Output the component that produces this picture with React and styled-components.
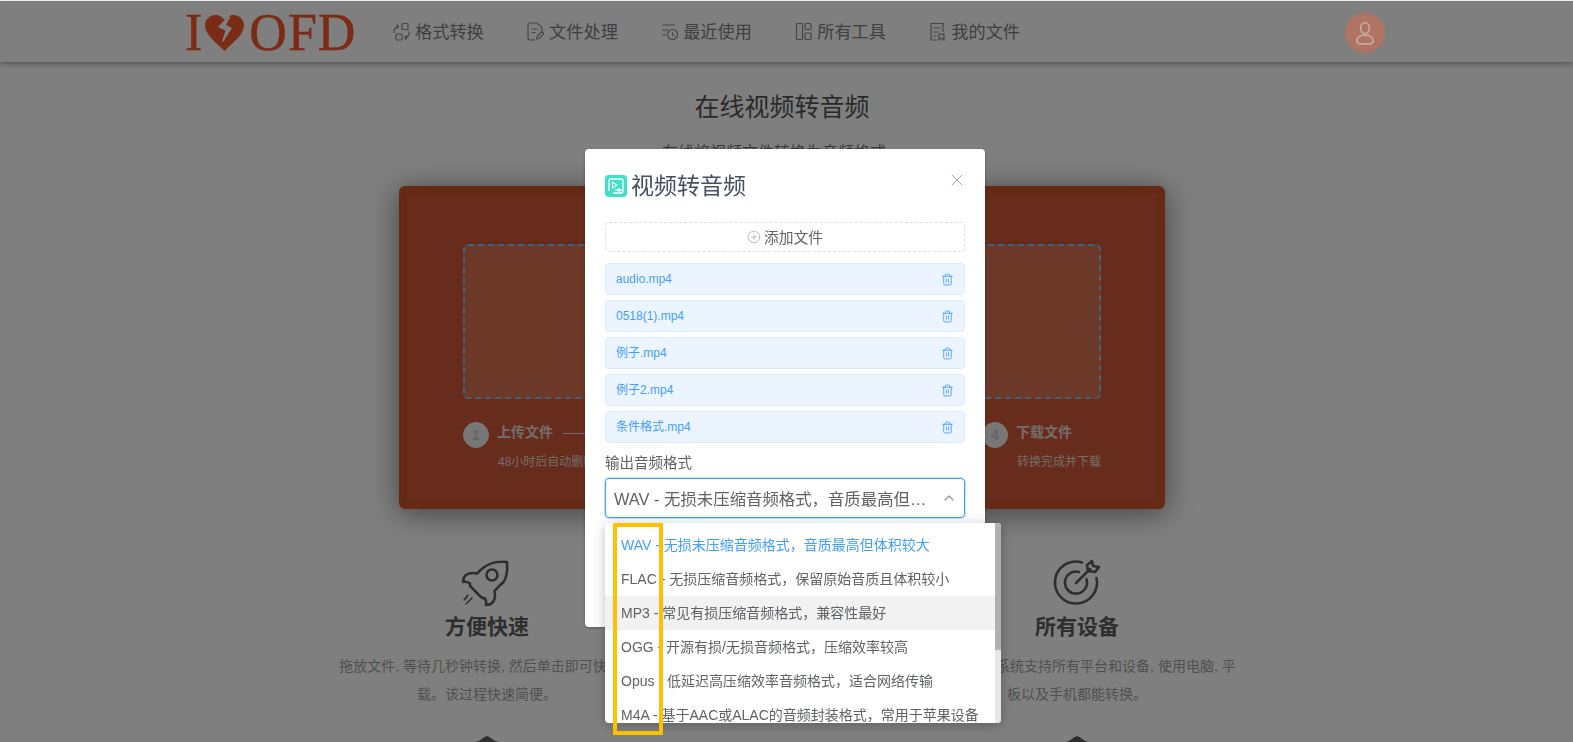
import React from 'react';
import styled, { createGlobalStyle } from 'styled-components';
import { CirclePlus, Trash2, X, ChevronUp, Shield } from 'lucide-react';

const Global = createGlobalStyle`
  html, body { margin: 0; padding: 0; height: 742px; overflow: hidden; background: #fff; }
  * { box-sizing: border-box; }
  body { font-family: "Liberation Sans", "Noto Sans CJK SC", sans-serif; }
`;

const Page = styled.div`
  width: 1573px;
  height: 742px;
  overflow: hidden;
  background: #fff;
  padding-top: 1px;
`;
const Header = styled.header`
  height: 61px;
  display: flex;
  align-items: center;
  padding: 0 188px 0 185px;
  background: #fff;
  box-shadow: 0 2px 6px rgba(0, 0, 0, 0.35);
`;
const Logo = styled.div`
  display: flex;
  align-items: center;
  width: 171px;
  height: 40px;
  margin-top: 2px;
  font-family: "Liberation Serif", serif;
  font-size: 52px;
  line-height: 40px;
  letter-spacing: 1px;
  color: #f85628;
  -webkit-text-stroke: 0.5px #f85628;
`;
const LogoLetter = styled.span`
  width: ${p => p.$w}px;
`;
const Nav = styled.nav`
  display: flex;
  gap: 43.3px;
  margin-left: 37px;
  flex: 1;
`;
const NavItem = styled.a`
  display: flex;
  align-items: center;
  gap: 5px;
  font-size: 17.2px;
  line-height: 24px;
  color: #808080;
  svg { width: 17px; height: 19px; fill: none; stroke: #8c8c8c; stroke-width: 1.2; }
`;
const Avatar = styled.div`
  width: 40px;
  height: 40px;
  border-radius: 50%;
  margin-top: 3px;
  position: relative;
  z-index: 20;
  background: #b07464;
  display: flex;
  align-items: center;
  justify-content: center;
  svg { width: 26px; height: 26px; fill: none; stroke: #c9aaa1; stroke-width: 1.5; }
`;
const Main = styled.main`
  width: 1564px;
  display: flex;
  flex-direction: column;
  align-items: center;
`;
const PageTitle = styled.h1`
  margin: 28px 0 0;
  font-size: 25px;
  line-height: 34px;
  font-weight: 400;
  color: #555;
`;
const Subtitle = styled.p`
  margin: 17px 0 0;
  font-size: 16px;
  line-height: 24px;
  color: #777;
`;
const Panel = styled.section`
  width: 766px;
  height: 323px;
  margin-top: 21px;
  padding: 50px 56px 0;
  border: 8px solid #cc5228;
  border-radius: 6px;
  background: #d05838;
  box-shadow: 0 4px 30px rgba(0, 0, 0, 0.5);
`;
const DropZone = styled.div`
  height: 155px;
  border: 2px dashed #7cc4ff;
  border-radius: 5px;
  background: #d87050;
`;
const Steps = styled.div`
  display: flex;
  margin-top: 23px;
`;
const Step = styled.div`
  display: flex;
  flex: ${p => (p.$last ? '0 0 119px' : '1')};
  gap: 8px;
`;
const StepNumber = styled.div`
  flex: none;
  width: 26px;
  height: 26px;
  border-radius: 50%;
  border: 1px solid #f6f6f6;
  background: #eee;
  color: #c8c8c8;
  font-size: 14px;
  font-weight: 700;
  line-height: 24px;
  text-align: center;
`;
const StepBody = styled.div`
  flex: 1;
  min-width: 0;
`;
const StepHead = styled.div`
  display: flex;
  align-items: center;
  gap: 10px;
  height: 18px;
  font-size: 14px;
  font-weight: 700;
  color: #e6dcd6;
  white-space: nowrap;
`;
const StepLine = styled.span`
  flex: 1;
  height: 1px;
  margin: 5px 10px 0 0;
  background: #e6dcd6;
`;
const StepSub = styled.div`
  margin-top: 13px;
  padding-left: 1px;
  font-size: 12px;
  line-height: 18px;
  color: #e6dcd6;
  white-space: nowrap;
`;
const Features = styled.div`
  display: grid;
  grid-template-columns: 320px 320px;
  column-gap: 270px;
  row-gap: 27px;
  margin-top: 50px;
`;
const Feature = styled.div`
  display: flex;
  flex-direction: column;
  align-items: center;
  text-align: center;
  svg.feature {
    width: 46px;
    height: 46px;
    overflow: visible;
    fill: none;
    stroke: #5c5c5c;
    stroke-width: 2.6;
    stroke-linecap: round;
    stroke-linejoin: round;
  }
`;
const FeatureTitle = styled.h3`
  margin: 5px 0 0;
  font-size: 21px;
  line-height: 34px;
  font-weight: 700;
  color: #5c5c5c;
`;
const FeatureText = styled.p`
  width: ${p => p.$w}px;
  flex: none;
  margin: 8px 0 0;
  font-size: 14px;
  line-height: 28px;
  color: #a0a0a0;
`;
const Overlay = styled.div`
  position: fixed;
  inset: 1px 0 0 0;
  z-index: 10;
  background: rgba(0, 0, 0, 0.5);
  display: flex;
  justify-content: center;
  align-items: flex-start;
  padding: 148px 3px 0 0;
`;
const Modal = styled.div`
  width: 400px;
  height: 478px;
  padding: 26px 20px 0;
  border-radius: 4px;
  background: #fff;
  box-shadow: 0 1px 3px rgba(0, 0, 0, 0.3);
  position: relative;
`;
const ModalHead = styled.div`
  display: flex;
  align-items: center;
  gap: 4px;
  height: 22px;
`;
const ModalTitle = styled.h2`
  margin: 0;
  font-size: 23px;
  line-height: 22px;
  font-weight: 400;
  color: #44505f;
`;
const CloseButton = styled.button`
  position: absolute;
  top: 21px;
  right: 18px;
  width: 20px;
  height: 20px;
  padding: 0;
  border: 0;
  background: none;
  color: #909399;
  display: flex;
  align-items: center;
  justify-content: center;
`;
const AddButton = styled.button`
  width: 100%;
  height: 30px;
  margin-top: 25px;
  display: flex;
  align-items: center;
  justify-content: center;
  gap: 3px;
  padding: 0 0 1px;
  border: 1px dashed #dcdfe6;
  border-radius: 4px;
  background: #fff;
  font-family: inherit;
  font-size: 14.8px;
  color: #606266;
  svg { color: #909399; }
`;
const FileList = styled.ul`
  list-style: none;
  display: flex;
  flex-direction: column;
  gap: 5px;
  margin: 11px 0 0;
  padding: 0;
`;
const FileRow = styled.li`
  height: 32px;
  padding: 0 10px;
  display: flex;
  align-items: center;
  justify-content: space-between;
  border: 1px solid #d9ecff;
  border-radius: 4px;
  background: #ecf5ff;
  color: #409eff;
  font-size: 12px;
  line-height: 16px;
`;
const FileName = styled.span`
  display: block;
  height: 16px;
`;
const FieldLabel = styled.label`
  display: block;
  margin-top: 10px;
  font-size: 14.5px;
  line-height: 20px;
  color: #606266;
`;
const SelectWrap = styled.div`
  position: relative;
  margin-top: 5px;
`;
const SelectBox = styled.div`
  height: 40px;
  padding: 0 7px 0 8px;
  display: flex;
  align-items: center;
  justify-content: space-between;
  border: 1px solid #409eff;
  border-radius: 4px;
  box-shadow: 0 0 0 1px #c6e2ff;
  font-size: 16.4px;
  color: #606266;
`;
const SelectValue = styled.span`
  width: 319px;
  white-space: nowrap;
  overflow: hidden;
  text-overflow: ellipsis;
`;
const Arrow = styled.span`
  display: flex;
  color: #909399;
`;
const Convert = styled.button`
  width: 100%;
  height: 40px;
  margin-top: 24px;
  border: 0;
  border-radius: 4px;
  background: #409eff;
  color: #fff;
  font-family: inherit;
  font-size: 14px;
`;
const Dropdown = styled.div`
  position: absolute;
  top: 45px;
  left: 0;
  width: 396px;
  height: 200px;
  display: flex;
  border-radius: 4px;
  background: #fff;
  box-shadow: 0 2px 12px rgba(0, 0, 0, 0.25);
  overflow: hidden;
`;
const OptionList = styled.ul`
  list-style: none;
  flex: 1;
  margin: 0;
  padding: 5px 0;
  overflow: hidden;
`;
const Option = styled.li`
  height: 34px;
  padding: 0 16px;
  font-size: 14px;
  line-height: 34px;
  white-space: nowrap;
  color: ${p => (p.$selected ? '#409eff' : '#606266')};
  background: ${p => (p.$hover ? '#f2f2f2' : 'transparent')};
`;
const ScrollTrack = styled.div`
  flex: none;
  width: 6px;
  background: #e6e6e6;
`;
const ScrollThumb = styled.div`
  height: 127px;
  background: #b0b0b0;
`;
const Highlight = styled.div`
  position: absolute;
  top: 45px;
  left: 8px;
  width: 50px;
  height: 212px;
  border: 4px solid #ffc000;
  border-radius: 1px;
  pointer-events: none;
`;

const Heart = () => (
  <svg width="39" height="36" viewBox="0 0 39 36" style={{ flex: 'none', marginLeft: 2, marginRight: 5 }}>
    <path fill="#f85628" d="M19.5 36C12 28 0 20 0 10.5 0 4.5 5 0 10.500 0c3.600 0 7 2 9 5 2-3 5.400-5 9-5C34 0 39 4.500 39 10.500 39 20 27 28 19.500 36Z" />
    <path fill="#fff" d="M19.500 5l-6.500 7 7.500 3.500-3.500 11 1 .6 9-14-6-3 4.500-8.500-2.500-.1Z" />
  </svg>
);

const ConvertIcon = () => (
  <svg viewBox="0 0 17 19"><rect x="9" y="1.500" width="6" height="6" rx="1" /><rect x="3" y="12" width="6" height="6" rx="1" /><path d="M1 11c-.5-3 1-6 4.500-6.500M3.500 2.500 5.500 4.500 3.500 6.500M16 9.500c.5 3-1 5.500-4 6.500M13.500 13.500l-2 2.500 2.500 1.500" /></svg>
);
const FileEditIcon = () => (
  <svg viewBox="0 0 17 19"><path d="M8 18H3a2 2 0 0 1-2-2V3a2 2 0 0 1 2-2h7l5 4.500V9" /><path d="M4.500 7h6M4.500 10.500h4M9.500 17l.5-2.500 5-5 2 2-5 5Z" /></svg>
);
const RecentIcon = () => (
  <svg viewBox="0 0 17 19"><path d="M1 3h13M1 8h6M1 13h4" /><circle cx="11.500" cy="12.500" r="5" /><path d="M11.500 10v3l2 1" /></svg>
);
const LayoutIcon = () => (
  <svg viewBox="0 0 17 19"><rect x="1.500" y="1.500" width="6" height="16" rx="1" /><rect x="10" y="1.500" width="6" height="6" rx="1" /><rect x="10" y="11" width="6" height="6.500" rx="1" /></svg>
);
const MyFileIcon = () => (
  <svg viewBox="0 0 17 19"><path d="M8 18H2V1.500h12V10" /><path d="M4.500 6h7M4.500 10h5M4.500 14h3M10 12h5v6l-2.500-2-2.500 2Z" /></svg>
);
const UserIcon = () => (
  <svg viewBox="0 0 24 24"><ellipse cx="12" cy="7.500" rx="4" ry="5" /><path d="M7.500 22h9a3 3 0 0 0 3-3c0-3-3-5-7.500-5s-7.500 2-7.500 5a3 3 0 0 0 3 3Z" /></svg>
);
const VideoBadge = () => (
  <svg width="22" height="22" viewBox="0 0 22 22" style={{ flex: 'none' }}>
    <rect width="22" height="22" rx="4" fill="#3fe0c5" />
    <path d="M4 16V6a2 2 0 0 1 2-2h10a2 2 0 0 1 2 2v10a2 2 0 0 1-2 2H8" fill="none" stroke="#fff" strokeWidth="1.300" />
    <path d="M7.500 7v6l4.500-3Z" fill="none" stroke="#fff" strokeWidth="1.200" />
    <path d="M10 15h8" stroke="#fff" strokeWidth="1.200" />
    <circle cx="14" cy="15" r="1.800" fill="#fff" />
  </svg>
);
const RocketIcon = () => (
  <svg className="feature" viewBox="2 -1 46 46">
    <path d="M45 2C36 1 27 3 21 8c-2 1.600-4 3.500-6 5.500-4-1-8-.5-11 1.500-2 1.500-3 4-3 7 2.500-.5 5 0 7 1.500-.5 1.500 0 2.500 1 3.500l10 10c1 1 2 1.500 3.500 1 1.500 2 2 4.500 1.500 7 3 0 5.500-1 7-3 2-3 2.500-7 1.500-11 2-2 4-4 5.500-6C44 22 46 12 45 2Z" />
    <circle cx="30" cy="15" r="5.500" />
    <path d="M6 35l-4 5M10 38l-6 6M5 37l-3 3" strokeWidth="1.500" />
  </svg>
);
const TargetIcon = () => (
  <svg className="feature" viewBox="0 0 46 46">
    <path d="M28 3.400A21 21 0 1 0 42.500 19" />
    <path d="M25 13A11 11 0 1 0 32.500 20.300" />
    <path d="M22 24 36 10M34 12l-1-6 5-4 1 5 6 1-4 5-7-1Z" />
  </svg>
);

const files = ['audio.mp4', '0518(1).mp4', '例子.mp4', '例子2.mp4', '条件格式.mp4'];
const options = [
  'WAV - 无损未压缩音频格式，音质最高但体积较大',
  'FLAC - 无损压缩音频格式，保留原始音质且体积较小',
  'MP3 - 常见有损压缩音频格式，兼容性最好',
  'OGG - 开源有损/无损音频格式，压缩效率较高',
  'Opus - 低延迟高压缩效率音频格式，适合网络传输',
  'M4A - 基于AAC或ALAC的音频封装格式，常用于苹果设备'
];
const steps = [
  ['上传文件', '48小时后自动删除文件'],
  ['选择格式', '选择输出音频格式'],
  ['开始转换', '等待转换完成'],
  ['下载文件', '转换完成并下载']
];

export default function App() {
  return (
    <Page>
      <Global />
      <Header>
        <Logo>
          <LogoLetter $w={19}>I</LogoLetter>
          <Heart />
          <span>OFD</span>
        </Logo>
        <Nav>
          <NavItem><ConvertIcon />格式转换</NavItem>
          <NavItem><FileEditIcon />文件处理</NavItem>
          <NavItem><RecentIcon />最近使用</NavItem>
          <NavItem><LayoutIcon />所有工具</NavItem>
          <NavItem><MyFileIcon />我的文件</NavItem>
        </Nav>
        <Avatar><UserIcon /></Avatar>
      </Header>
      <Main>
        <PageTitle>在线视频转音频</PageTitle>
        <Subtitle>在线将视频文件转换为音频格式。</Subtitle>
        <Panel>
          <DropZone />
          <Steps>
            {steps.map(([title, sub], i) => {
              const last = i === steps.length - 1;
              return (
                <Step key={title} $last={last}>
                  <StepNumber>{i + 1}</StepNumber>
                  <StepBody>
                    <StepHead>{title}{!last && <StepLine />}</StepHead>
                    <StepSub>{sub}</StepSub>
                  </StepBody>
                </Step>
              );
            })}
          </Steps>
        </Panel>
        <Features>
          <Feature>
            <RocketIcon />
            <FeatureTitle>方便快速</FeatureTitle>
            <FeatureText $w={300}>拖放文件, 等待几秒钟转换, 然后单击即可快速下载。该过程快速简便。</FeatureText>
          </Feature>
          <Feature>
            <TargetIcon />
            <FeatureTitle>所有设备</FeatureTitle>
            <FeatureText $w={326}>高效, 稳定的系统支持所有平台和设备, 使用电脑, 平板以及手机都能转换。</FeatureText>
          </Feature>
          <Feature>
            <Shield className="feature" />
          </Feature>
          <Feature>
            <Shield className="feature" />
          </Feature>
        </Features>
      </Main>
      <Overlay>
        <Modal>
          <ModalHead>
            <VideoBadge />
            <ModalTitle>视频转音频</ModalTitle>
          </ModalHead>
          <CloseButton aria-label="关闭"><X size={20} strokeWidth={1} /></CloseButton>
          <AddButton><CirclePlus size={14} strokeWidth={1} />添加文件</AddButton>
          <FileList>
            {files.map(name => (
              <FileRow key={name}><FileName>{name}</FileName><Trash2 size={13} strokeWidth={1.600} /></FileRow>
            ))}
          </FileList>
          <FieldLabel>输出音频格式</FieldLabel>
          <SelectWrap>
            <SelectBox>
              <SelectValue>{options[0]}</SelectValue>
              <Arrow><ChevronUp size={16} strokeWidth={1.800} /></Arrow>
            </SelectBox>
            <Convert>开始转换</Convert>
            <Dropdown>
              <OptionList>
                {options.map((o, i) => (
                  <Option key={o} $selected={i === 0} $hover={i === 2}>{o}</Option>
                ))}
              </OptionList>
              <ScrollTrack><ScrollThumb /></ScrollTrack>
            </Dropdown>
            <Highlight />
          </SelectWrap>
        </Modal>
      </Overlay>
    </Page>
  );
}
